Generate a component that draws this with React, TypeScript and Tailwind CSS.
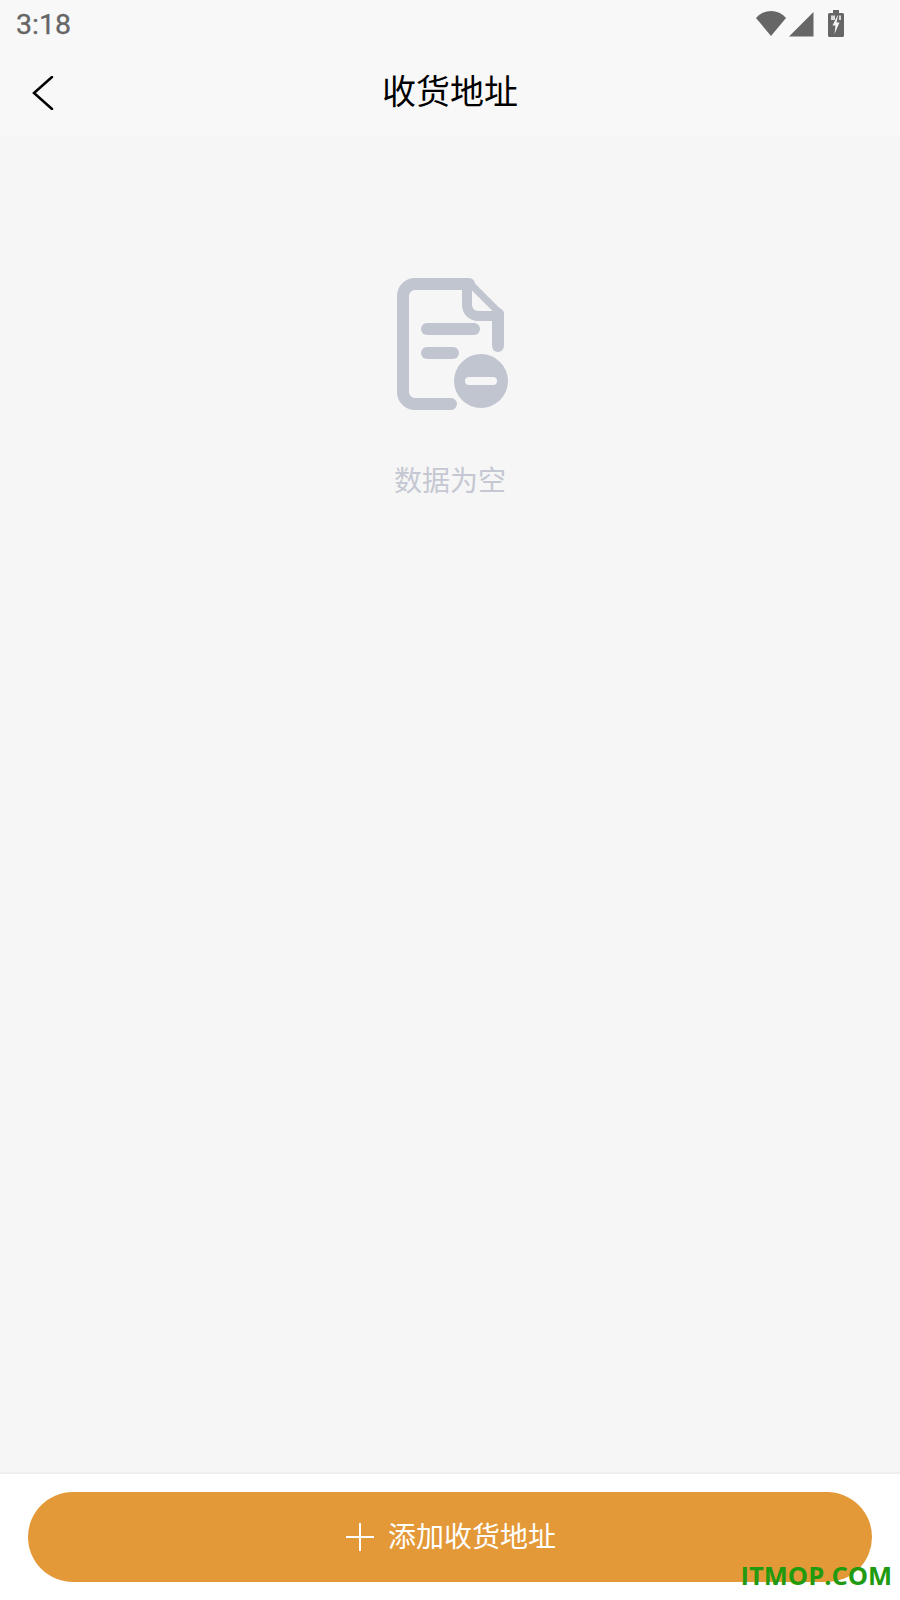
import React from 'react'

const cjk = 'font-["Noto_Sans_CJK_SC","Noto_Sans",sans-serif]'

function StatusIcons() {
  return (
    <div className="flex items-start">
      {/* wifi */}
      <svg width="30" height="25" viewBox="0 0 30 25" className="mt-[11px]">
        <path d="M15 25 L0 7 A19.600 19.600 0 0 1 30 7 Z" fill="#666666" />
      </svg>
      {/* signal */}
      <svg width="25" height="25" viewBox="0 0 25 25" className="ml-[3px] mt-[12px]">
        <path d="M24.500 0 V24.500 H0 Z" fill="#666666" />
      </svg>
      {/* battery */}
      <svg width="16" height="27" viewBox="0 0 16 27" className="ml-[14px] mt-[10px]">
        <path d="M5 0 H11 V3 H14.500 A1.500 1.500 0 0 1 16 4.500 V25.500 A1.500 1.500 0 0 1 14.500 27 H1.500 A1.500 1.500 0 0 1 0 25.500 V4.500 A1.500 1.500 0 0 1 1.500 3 H5 Z" fill="#666666" />
        <path d="M3 5.500 H7 V10 H3 Z M11 5.500 H13 V10 H11 Z" fill="#dcdcdc" />
        <path d="M9.500 5.500 L4.500 15.500 H7.500 L6.500 24 L11.500 12.500 H8.500 L10 5.500 Z" fill="#f6f6f6" />
      </svg>
    </div>
  )
}

function EmptyIcon() {
  return (
    <svg width="112" height="134" viewBox="0 0 112 134" fill="none">
      {/* page outline */}
      <path
        d="M54 126 H18 A12 12 0 0 1 6 114 V18 A12 12 0 0 1 18 6 H72"
        stroke="#c1c5cf"
        strokeWidth="12"
        strokeLinecap="round"
      />
      <path d="M71 3.500 L103 35.500" stroke="#c1c5cf" strokeWidth="7" strokeLinecap="round" />
      <path d="M101 36 V68" stroke="#c1c5cf" strokeWidth="12" strokeLinecap="round" />
      {/* page fold */}
      <path d="M70 6 V27 A11 11 0 0 0 81 38 H101" stroke="#c1c5cf" strokeWidth="10" />
      <path d="M30 51 H77" stroke="#c1c5cf" strokeWidth="12" strokeLinecap="round" />
      <path d="M30 75 H56" stroke="#c1c5cf" strokeWidth="12" strokeLinecap="round" />
      {/* minus badge */}
      <circle cx="84" cy="103" r="27" fill="#c1c5cf" />
      <path d="M72 103 H96" stroke="#f6f6f6" strokeWidth="8" strokeLinecap="round" />
    </svg>
  )
}

export default function App() {
  return (
    <div className={`relative flex h-[1600px] w-[900px] flex-col overflow-hidden bg-[#f6f6f6] ${cjk}`}>
      {/* Header */}
      <div className="h-[135px] bg-[#f8f8f8]">
        <div className="flex h-[50px] items-start justify-between pl-4 pr-[56px]">
          <span className="mt-[5px] font-['Roboto',sans-serif] text-[28.500px] leading-[40px] text-[#666666] [-webkit-text-stroke:0.300px_#666666]">3:18</span>
          <StatusIcons />
        </div>
        <div className="relative flex h-[85px] items-center justify-center pb-[5px]">
          <svg width="22" height="34" viewBox="0 0 22 34" className="absolute left-[32px] top-[26px]">
            <path d="M20 1 L2 17 L20 33" stroke="#000000" strokeWidth="2.500" fill="none" strokeLinecap="round" />
          </svg>
          <h1 className="text-[34px] font-normal leading-[44px] text-black">收货地址</h1>
        </div>
      </div>

      {/* Empty state */}
      <div className="flex flex-1 flex-col items-center pt-[143px]">
        <div className="ml-[6px]">
          <EmptyIcon />
        </div>
        <p className="mt-[47px] text-[28px] leading-[40px] text-[#c5c8d2]">数据为空</p>
      </div>

      {/* Footer */}
      <div className="border-t-2 border-[#eeeeee] bg-white px-[28px] py-[18px]">
        <button className="flex h-[90px] w-full items-center justify-center gap-[14px] rounded-full bg-[#e49938] pl-[2px] text-[28px] text-white">
          <svg width="28" height="28" viewBox="0 0 28 28">
            <path d="M0 14 H28 M14 0 V28" stroke="#ffffff" strokeWidth="2" />
          </svg>
          <span className="mb-[4px]">添加收货地址</span>
        </button>
      </div>

      {/* Watermark */}
      <span className="absolute bottom-[8px] right-[8px] font-['Open_Sans',sans-serif] text-[25.500px] font-bold leading-[34px] text-[#229a10]">ITMOP.COM</span>
    </div>
  )
}
